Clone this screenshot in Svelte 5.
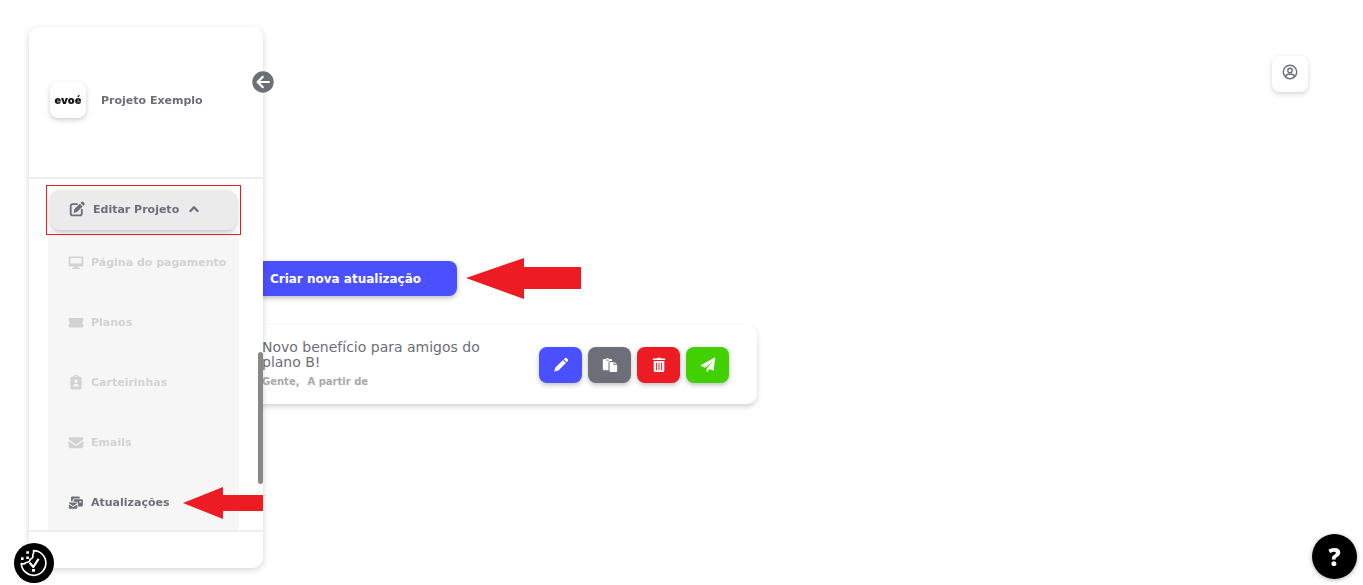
<script>
  let menuOpen = true;
  let active = "Atualizações";

  const items = [
    { label: "Página do pagamento", icon: "desktop" },
    { label: "Planos", icon: "ticket" },
    { label: "Carteirinhas", icon: "badge" },
    { label: "Emails", icon: "mail" },
    { label: "Atualizações", icon: "bulk" },
  ];
</script>

<aside class="sidebar">
  <div class="project">
    <div class="logo">evoé</div>
    <span>Projeto Exemplo</span>
    <button class="collapse" type="button" aria-label="Recolher menu">
      <svg viewBox="0 0 22 22" width="22" height="22">
        <circle cx="11" cy="11" r="10.7" fill="#6c6e78" />
        <path d="M17 11H6M10.8 5.8 5.6 11l5.2 5.2" fill="none" stroke="#fff" stroke-width="2.2" stroke-linecap="round" stroke-linejoin="round" />
      </svg>
    </button>
  </div>

  <nav class="menu">
    <div class="marked">
      <button class="toggle" type="button" aria-expanded={menuOpen} on:click={() => (menuOpen = !menuOpen)}>
        <svg viewBox="0 0 16 16" width="16" height="16">
          <path d="M8 3.2H3.6A1.9 1.9 0 0 0 1.7 5.1v7.3a1.9 1.9 0 0 0 1.9 1.9h7.3a1.9 1.9 0 0 0 1.9-1.9V8.7" fill="none" stroke="currentColor" stroke-width="1.8" stroke-linecap="round" />
          <path d="m5.2 8.3 5.6-5.6 2.8 2.8L8 11.1l-3.3.8zM11.5 2l.9-.9a1.4 1.4 0 0 1 2 0l.8.8a1.4 1.4 0 0 1 0 2l-.9.9z" fill="currentColor" />
        </svg>
        <span>Editar Projeto</span>
        <svg class="chevron" viewBox="0 0 10 8" width="10" height="8">
          <path d="m1.4 6 3.6-3.8L8.6 6" fill="none" stroke="currentColor" stroke-width="2.2" stroke-linecap="round" stroke-linejoin="round" />
        </svg>
      </button>
    </div>

    {#if menuOpen}
      <ul class="submenu">
        {#each items as item}
          <li>
            <a href="#{item.icon}" class:active={item.label === active}>
              <svg viewBox="0 0 16 16" width="16" height="16" fill="currentColor">
                {#if item.icon === "desktop"}
                  <path fill-rule="evenodd" d="M2.2 2.4h11.600a1.500 1.500 0 0 1 1.500 1.500v7a1.500 1.500 0 0 1-1.500 1.500H9.600l.4 1.400h1.400a.6.6 0 0 1 0 1.200H4.600a.6.6 0 0 1 0-1.200H6l.4-1.400H2.200A1.500 1.500 0 0 1 .7 10.900v-7a1.500 1.500 0 0 1 1.500-1.500zM2.400 4v5.600h11.200V4z" />
                {:else if item.icon === "ticket"}
                  <path d="M2 4h12a1.300 1.300 0 0 1 1.300 1.300V7a1.900 1.900 0 0 0 0 3.500v1.700a1.300 1.300 0 0 1-1.300 1.300H2a1.300 1.300 0 0 1-1.300-1.300v-1.700a1.900 1.900 0 0 0 0-3.500V5.300A1.300 1.300 0 0 1 2 4z" />
                {:else if item.icon === "badge"}
                  <path fill-rule="evenodd" d="M6 2.400a2 2 0 0 1 4 0h1.800A1.700 1.700 0 0 1 13.500 4v9.800a1.700 1.700 0 0 1-1.700 1.700H4.200a1.700 1.700 0 0 1-1.700-1.700V4a1.700 1.700 0 0 1 1.700-1.600zM8 1.700a.8.8 0 1 0 0 1.600.8.8 0 0 0 0-1.600zM8 5.400a1.800 1.800 0 1 0 0 3.600 1.800 1.800 0 0 0 0-3.600zM4.900 12.600h6.200c0-1.500-1-2.700-2.300-2.700H7.200c-1.300 0-2.300 1.200-2.300 2.700z" />
                {:else if item.icon === "mail"}
                  <path d="M2 3.200h12a1.300 1.300 0 0 1 1.300 1.300c0 .5-.2.9-.6 1.200l-6 4.500a1.200 1.200 0 0 1-1.400 0l-6-4.500A1.400 1.400 0 0 1 .7 4.500 1.300 1.300 0 0 1 2 3.200zM.7 6.700l6 4.500a2.200 2.200 0 0 0 2.600 0l6-4.500v5.700a1.800 1.800 0 0 1-1.800 1.800h-11a1.800 1.800 0 0 1-1.800-1.800z" />
                {:else}
                  <path d="M4.300 2.400h6.200a1.300 1.300 0 0 1 1.300 1.300v.8H6.500a1.900 1.900 0 0 0-1.900 1.900v.8H3V3.700a1.300 1.300 0 0 1 1.300-1.300z" />
                  <path fill-rule="evenodd" d="M6.800 5.300h6.900a1.200 1.200 0 0 1 1.200 1.200v4.700a1.200 1.200 0 0 1-1.200 1.200h-3.600V9.300a1.500 1.500 0 0 0-1.500-1.500h-3V6.500a1.200 1.200 0 0 1 1.200-1.200zM11.400 6.900v1.700h1.800V6.900z" />
                  <path d="M1.600 8.500h7a.7.7 0 0 1 .7.8L5.100 11.900.9 9.300a.7.7 0 0 1 .7-.8zM.9 10.400l4.200 2.600 4.200-2.600v3.400a.9.900 0 0 1-.9.900H1.800a.9.900 0 0 1-.9-.9z" />
                {/if}
              </svg>
              {item.label}
            </a>
            {#if item.label === active}
              <svg class="pointer" viewBox="0 0 80 32" width="80" height="32">
                <path d="M0 16 40 0v8h40v16H40v8z" fill="#ed1c24" />
              </svg>
            {/if}
          </li>
        {/each}
      </ul>
    {/if}
    <div class="scrollbar"></div>
  </nav>

  <div class="footer"></div>
</aside>

<main>
  <header>
    <button class="profile" type="button" aria-label="Perfil">
      <svg viewBox="0 0 16 16" width="16" height="16" fill="none" stroke="#6c6e78" stroke-width="1.4">
        <circle cx="8" cy="8" r="6.7" />
        <circle cx="8" cy="6.5" r="2.2" />
        <path d="M3.600 13c.3-2 1.500-2.700 2.900-2.700h3c1.400 0 2.600.7 2.900 2.700" />
      </svg>
    </button>
  </header>

  <div class="create-row">
    <button class="create" type="button">Criar nova atualização</button>
    <svg viewBox="0 0 115 42" width="115" height="42">
      <path d="M0 20 58 0v9h57v22H58v10z" fill="#ed1c24" />
    </svg>
  </div>

  <article class="card">
    <div class="info">
      <h2>Novo benefício para amigos do plano B!</h2>
      <p><span>Gente,</span> <span>A partir de</span></p>
    </div>
    <div class="actions">
      <button class="edit" type="button" aria-label="Editar">
        <svg viewBox="0 0 16 16" width="16" height="16" fill="#fff">
          <path d="M10 3.100 12.900 6 5.700 13.200a2 2 0 0 1-.9.500l-3 .9c-.3.100-.6-.2-.5-.5l.9-3a2 2 0 0 1 .5-.9zM10.800 2.300l.9-.9a1.500 1.500 0 0 1 2.200 0l.7.700a1.500 1.500 0 0 1 0 2.200l-.9.900z" />
        </svg>
      </button>
      <button class="copy" type="button" aria-label="Duplicar">
        <svg viewBox="0 0 16 16" width="16" height="16" fill="#fff">
          <path d="M2 1.900h2a1.700 1.700 0 0 1 3 0h2a1.200 1.200 0 0 1 1.200 1.200v.9H8.500A2 2 0 0 0 6.500 6v7.200H2A1.200 1.200 0 0 1 .8 12V3.100A1.200 1.200 0 0 1 2 1.900z" />
          <path d="M8.700 4.900h2.900v3h3.600v5.800a1.200 1.200 0 0 1-1.200 1.200H8.700a1.200 1.200 0 0 1-1.200-1.200V6.100a1.200 1.200 0 0 1 1.200-1.200zM12.400 4.900l2.800 2.300h-2.800z" />
          <path d="M4 2.700h3v.8H4z" fill="#6c6e78" />
        </svg>
      </button>
      <button class="remove" type="button" aria-label="Excluir">
        <svg viewBox="0 0 16 16" width="16" height="16" fill="#fff">
          <path d="M5.700 1.400 6.200.8h3.600l.5.600h3.200a.8.800 0 0 1 0 1.700h-11a.8.800 0 0 1 0-1.700z" />
          <path fill-rule="evenodd" d="M2.700 4h10.600v9.400a1.600 1.600 0 0 1-1.600 1.600H4.300a1.600 1.600 0 0 1-1.600-1.600zM4.900 5.700v7.600h1V5.700zM7.500 5.700v7.600h1V5.700zM10.100 5.700v7.600h1V5.700z" />
        </svg>
      </button>
      <button class="send" type="button" aria-label="Enviar">
        <svg viewBox="0 0 16 16" width="16" height="16" fill="#fff">
          <path d="M15.200 1.200 13.500 13.700 9.600 12l-2.100 2.700c-.4.500-.9.300-.9-.3v-2.700l6.200-7.400-7.500 6.500-4.200-1.700c-.5-.3-.5-.9 0-1.200L14.300.7c.5-.3 1 0 .9.500z" />
        </svg>
      </button>
    </div>
  </article>
</main>

<button class="cookies" type="button" aria-label="Preferências de cookies">
  <svg viewBox="0 0 40 40" width="40" height="40" fill="none" stroke="#fff" stroke-width="1.7" stroke-linejoin="round">
    <path d="M19.600 7.700A12.300 12.300 0 1 1 7.300 20.500c1.800.8 3.600.4 4.600-1 2.500.1 4.300-1.200 4.200-3.300 2.300-.6 3.300-2.200 2.700-4.100.8-1.300 1.100-2.800.8-4.400z" />
    <path d="m15.600 19.600 3.700 4.400 5.300-8.200" stroke-width="2.2" />
    <path d="M18 26h3v2.800h-3zM7 14.300h2.600v2.600H7zM12.300 13.500h2.600v2.600h-2.600zM12.300 8.200h2.600v2.600h-2.600z" fill="#fff" stroke="none" />
  </svg>
</button>

<button class="help" type="button" aria-label="Ajuda">?</button>

<style>
  :global(body) {
    background: #fefefe;
    font-family: "DejaVu Sans", "Liberation Sans", sans-serif;
    color: #6c6e78;
  }
  button {
    border: none;
    padding: 0;
    font-family: inherit;
    color: inherit;
    cursor: pointer;
  }
  svg {
    display: block;
    flex: none;
  }
  .sidebar {
    position: fixed;
    top: 27px;
    bottom: 17px;
    left: 29px;
    z-index: 2;
    width: 234px;
    display: flex;
    flex-direction: column;
    background: #fff;
    border-radius: 10px;
    box-shadow: 0 2px 6px rgba(0, 0, 0, 0.16);
  }
  .project {
    position: relative;
    display: flex;
    align-items: center;
    gap: 15px;
    height: 146px;
    padding: 0 21px 4px;
    border-bottom: 2px solid #eee;
    font-size: 11px;
    font-weight: 600;
  }
  .logo {
    display: flex;
    align-items: center;
    justify-content: center;
    width: 36px;
    height: 36px;
    border-radius: 8px;
    background: #fff;
    box-shadow: 0 2px 5px rgba(0, 0, 0, 0.2);
    color: #111;
    font-family: "Inter", sans-serif;
    font-size: 11px;
    font-weight: 900;
  }
  .collapse {
    position: absolute;
    top: 44px;
    right: -11px;
    border-radius: 50%;
    background: none;
  }
  .menu {
    position: relative;
    flex: 1;
    min-height: 0;
    padding-top: 11px;
    overflow: hidden;
  }
  .marked {
    position: relative;
    z-index: 1;
    margin: 0 26px 0 21px;
  }
  .marked::after {
    content: "";
    position: absolute;
    inset: -5px -4px;
    border: 1px solid #ed1c24;
    pointer-events: none;
  }
  .toggle {
    display: flex;
    align-items: center;
    gap: 8px;
    width: 100%;
    height: 40px;
    padding: 0 19px 2px;
    border-radius: 10px;
    background: #ebebeb;
    box-shadow: 0 2px 4px rgba(0, 0, 0, 0.2);
    font-size: 11px;
    font-weight: 600;
  }
  .chevron {
    margin-left: 2px;
  }
  .submenu {
    list-style: none;
    margin: 0 24px 0 19px;
    padding: 2px 0 0;
    background: #f6f6f6;
  }
  .submenu li {
    position: relative;
  }
  .submenu a {
    display: flex;
    align-items: center;
    gap: 7px;
    height: 60px;
    padding-left: 20px;
    color: #d2d2d2;
    font-size: 11px;
    font-weight: 700;
    text-decoration: none;
    white-space: nowrap;
  }
  .submenu a.active {
    color: #6c6e78;
  }
  .pointer {
    position: absolute;
    top: 15px;
    right: -24px;
  }
  .scrollbar {
    position: absolute;
    top: 173px;
    right: 0;
    width: 5px;
    height: 132px;
    border-radius: 3px;
    background: #888;
  }
  .footer {
    height: 36px;
    border-top: 2px solid #eee;
  }
  main {
    box-sizing: border-box;
    min-height: 100vh;
    padding: 56px 55px 0 234px;
  }
  header {
    display: flex;
    justify-content: flex-end;
  }
  .profile {
    display: flex;
    align-items: flex-start;
    justify-content: center;
    width: 36px;
    height: 36px;
    padding-top: 8px;
    border-radius: 8px;
    background: #fff;
    box-shadow: 0 2px 5px rgba(0, 0, 0, 0.16);
  }
  .create-row {
    display: flex;
    align-items: center;
    gap: 9px;
    height: 35px;
    margin: 169px 0 29px;
  }
  .create {
    width: 223px;
    height: 35px;
    border-radius: 8px;
    background: #4b50ff;
    box-shadow: 0 2px 5px rgba(0, 0, 0, 0.25);
    color: #fff;
    font-size: 12px;
    font-weight: 700;
  }
  .card {
    display: flex;
    align-items: center;
    justify-content: space-between;
    max-width: 467px;
    height: 79px;
    padding: 0 28px;
    border-radius: 10px;
    background: #fff;
    box-shadow: 0 3px 5px rgba(0, 0, 0, 0.16);
  }
  .info {
    width: 230px;
  }
  h2 {
    margin: 0;
    font-size: 14px;
    line-height: 15px;
    font-weight: 500;
  }
  p {
    display: flex;
    gap: 8px;
    margin: 4px 0 0;
    color: #a9a9a9;
    font-size: 10px;
    line-height: 16px;
    font-weight: 600;
  }
  .actions {
    display: flex;
    gap: 6px;
  }
  .actions button {
    display: flex;
    align-items: center;
    justify-content: center;
    width: 43px;
    height: 36px;
    border-radius: 8px;
    box-shadow: 0 2px 5px rgba(0, 0, 0, 0.25);
  }
  .actions .edit {
    background: #4b50ff;
  }
  .actions .copy {
    background: #6c6e78;
  }
  .actions .remove {
    background: #ed1c24;
  }
  .actions .send {
    background: #41d100;
  }
  .cookies {
    position: fixed;
    bottom: 2px;
    left: 14px;
    z-index: 3;
    border-radius: 50%;
    background: #000;
  }
  .help {
    position: fixed;
    right: 6px;
    bottom: 6px;
    z-index: 3;
    width: 45px;
    height: 45px;
    border-radius: 50%;
    background: #000;
    box-shadow: 0 1px 4px rgba(0, 0, 0, 0.3);
    color: #fff;
    font-family: "Noto Sans", sans-serif;
    font-size: 24px;
    font-weight: 900;
  }
</style>
